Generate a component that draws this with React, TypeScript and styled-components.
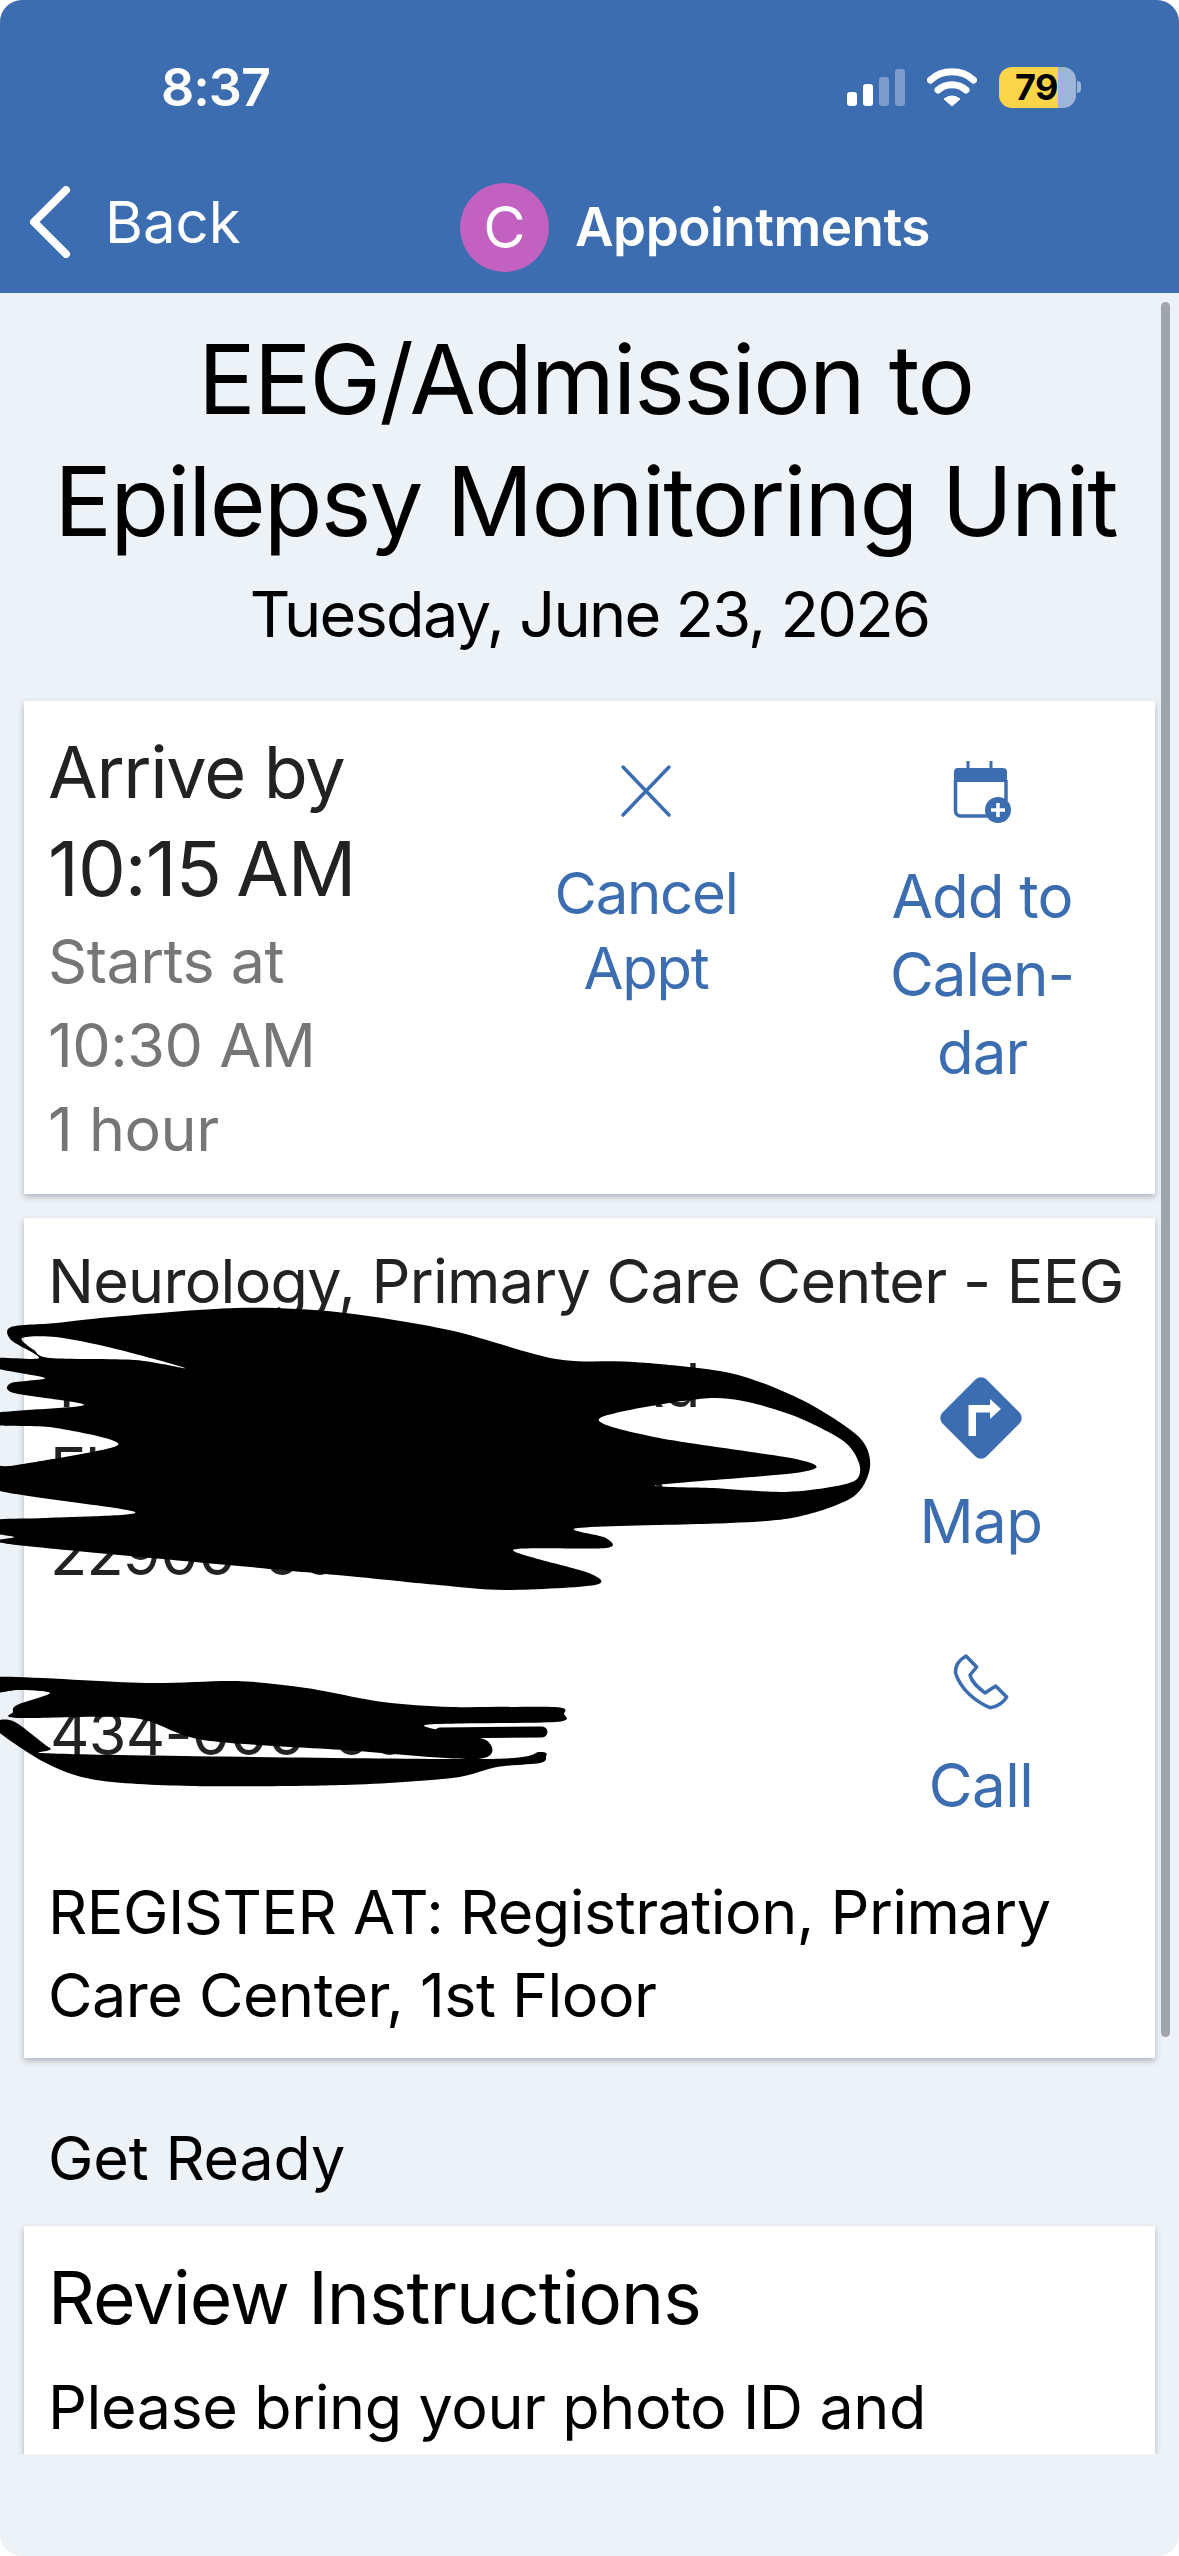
import React from "react";
import styled, { createGlobalStyle } from "styled-components";

const BLUE = "#3c6db0";

const Global = createGlobalStyle`
    html, body { margin: 0; padding: 0; background: #fff; }
    body { font-family: Inter, "Liberation Sans", sans-serif; }
`;

const Screen = styled.div`
    position: relative;
    width: 1179px;
    height: 2556px;
    overflow: hidden;
    background: #edf2f6;
    border-radius: 22px;
    display: flex;
    flex-direction: column;
`;

const Header = styled.header`
    background: ${BLUE};
    height: 293px;
    color: #fff;
    flex-shrink: 0;
    display: flex;
    flex-direction: column;
`;

const StatusBar = styled.div`
    display: flex;
    justify-content: space-between;
    align-items: center;
    height: 174px;
    padding: 0 98px 0 161px;
`;

const Clock = styled.span`
    font-size: 52px;
    font-weight: 600;
    letter-spacing: -1px;
`;

const StatusIcons = styled.div`
    display: flex;
    align-items: center;
    gap: 22px;
`;

const Battery = styled.div`
    display: flex;
    align-items: center;
    gap: 1px;
`;

const BatteryBody = styled.div`
    width: 77px;
    height: 41px;
    border-radius: 13px;
    background: linear-gradient(to right, #fad54a 59px, #9db5d8 59px);
    color: #000;
    font-size: 36px;
    font-weight: 700;
    line-height: 41px;
    padding-right: 18px;
    box-sizing: border-box;
    text-align: right;
    letter-spacing: -0.5px;
`;

const BatteryCap = styled.div`
    width: 4px;
    height: 12px;
    background: #9db5d8;
    border-radius: 0 6px 6px 0;
`;

const NavBar = styled.div`
    display: flex;
    align-items: center;
    height: 90px;
    padding-left: 29px;
    margin-top: 8px;
`;

const BackLink = styled.div`
    display: flex;
    align-items: center;
    gap: 34px;
    font-size: 58px;
    width: 431px;
    margin-top: -10px;
`;

const Avatar = styled.div`
    width: 89px;
    height: 89px;
    border-radius: 50%;
    background: #c261c0;
    font-size: 58px;
    display: flex;
    align-items: center;
    justify-content: center;
    margin-right: 26px;
`;

const NavTitle = styled.span`
    font-size: 53px;
    font-weight: 600;
    letter-spacing: -0.5px;
`;

const Body = styled.main`
    height: 2161px;
    overflow: hidden;
    flex-shrink: 0;
    padding: 25px 24px 0;
    box-sizing: border-box;
`;

const Title = styled.h1`
    margin: 0;
    padding-right: 8px;
    text-align: center;
    font-size: 96px;
    font-weight: 400;
    line-height: 122px;
    color: #000;
    letter-spacing: -1.9px;
    white-space: nowrap;
`;

const DateLine = styled.div`
    text-align: center;
    font-size: 63px;
    line-height: 84px;
    color: #000;
    margin-top: 10px;
    margin-bottom: 45px;
    letter-spacing: -1.7px;
`;

const Card = styled.section`
    background: #fff;
    box-shadow: 0 3px 6px rgba(60, 70, 90, 0.35);
    margin-bottom: 24px;
`;

const TimeCard = styled(Card)`
    display: grid;
    grid-template-columns: 432px 332px 340px;
    height: 493px;
    padding: 23px 0 0 24px;
    box-sizing: border-box;
`;

const Arrive = styled.div`
    font-size: 72px;
    line-height: 96px;
    color: #222;
    letter-spacing: -1.3px;
`;

const ArriveTime = styled.div`
    font-size: 76px;
    letter-spacing: -1px;
    word-spacing: -5px;
`;

const Muted = styled.div`
    font-size: 61px;
    line-height: 84px;
    color: #767676;
    letter-spacing: -0.5px;
    margin-top: 3px;
`;

const Action = styled.div<{ $top: number; $size?: number; $line?: number; $gap?: number; $track?: number }>`
    display: flex;
    flex-direction: column;
    align-items: center;
    text-align: center;
    color: ${BLUE};
    font-size: ${(p) => p.$size ?? 60}px;
    line-height: ${(p) => p.$line ?? 78}px;
    letter-spacing: ${(p) => p.$track ?? -0.5}px;
    padding-top: ${(p) => p.$top}px;

    & > svg {
        height: 70px;
        margin-bottom: ${(p) => p.$gap ?? 30}px;
    }
`;

const PlaceCard = styled(Card)`
    height: 840px;
    padding: 21px 0 0 24px;
    box-sizing: border-box;
    color: #222;
`;

const Line = styled.div`
    font-size: 61px;
    line-height: 84px;
    letter-spacing: -0.7px;
    white-space: nowrap;
`;

const PlaceGrid = styled.div`
    display: grid;
    grid-template-columns: 1fr 250px;
    margin-top: 20px;
    padding-right: 49px;
`;

const AddressBlock = styled.div`
    padding-left: 2px;
    display: flex;
    flex-direction: column;
    gap: 96px;
`;

const Register = styled.div`
    font-size: 61px;
    line-height: 83px;
    color: #000;
    letter-spacing: -0.5px;
    margin-top: 47px;
`;

const SectionLabel = styled.div`
    font-size: 61px;
    line-height: 84px;
    color: #000;
    padding: 34px 24px 26px;
    letter-spacing: -0.2px;
`;

const ReviewCard = styled(Card)`
    height: 300px;
    padding: 27px 24px;
    margin: 0;
    box-sizing: border-box;
    color: #000;
`;

const ReviewTitle = styled.h2`
    margin: 0 0 22px;
    font-size: 73px;
    font-weight: 400;
    line-height: 90px;
    letter-spacing: -1px;
`;

const ReviewText = styled.div`
    font-size: 61px;
    line-height: 84px;
    letter-spacing: -0.4px;
`;

const Footer = styled.div`
    flex: 1;
    background: #edf2f6;
    position: relative;
    z-index: 1;
`;

const Scrollbar = styled.div`
    position: absolute;
    left: 1161px;
    top: 302px;
    width: 9px;
    height: 1735px;
    border-radius: 5px;
    background: #a0a4ab;
`;

const Scribble = styled.svg`
    position: absolute;
    left: 0;
    top: 0;
    z-index: 2;
    pointer-events: none;
`;

// turns traced points into a smooth closed path
function smooth(pts: number[][]) {
    let d = `M${pts[0][0]} ${pts[0][1]}`;
    const n = pts.length;
    for (let i = 0; i < n; i++) {
        const p0 = pts[(i - 1 + n) % n];
        const p1 = pts[i];
        const p2 = pts[(i + 1) % n];
        const p3 = pts[(i + 2) % n];
        const c1x = p1[0] + (p2[0] - p0[0]) / 7;
        const c1y = p1[1] + (p2[1] - p0[1]) / 7;
        const c2x = p2[0] - (p3[0] - p1[0]) / 7;
        const c2y = p2[1] - (p3[1] - p1[1]) / 7;
        d += ` C${c1x} ${c1y} ${c2x} ${c2y} ${p2[0]} ${p2[1]}`;
    }
    return d + " Z";
}

const mainBlob = [
    [11, 1327], [56, 1323], [112, 1317], [236, 1308], [337, 1312], [449, 1330], [556, 1359], [634, 1362],
    [730, 1373], [802, 1400], [859, 1437], [870, 1467], [853, 1497], [797, 1517], [730, 1523], [578, 1528],
    [606, 1538], [606, 1548], [513, 1550], [589, 1573], [595, 1585], [505, 1590], [438, 1585], [337, 1575],
    [17, 1545], [14, 1537], [-4, 1533], [-4, 1520], [45, 1518], [135, 1512], [-4, 1490], [-4, 1467], [17, 1465],
    [118, 1445], [56, 1428], [-4, 1425], [-4, 1413], [84, 1405], [14, 1393], [11, 1383], [45, 1378], [-4, 1368],
    [-4, 1358], [39, 1358], [11, 1340],
];
const loopHole = [[22, 1338], [56, 1337], [112, 1348], [185, 1368], [135, 1360], [50, 1358], [34, 1350]];
const rightHole = [
    [600, 1418], [713, 1398], [786, 1413], [842, 1440], [859, 1463], [856, 1480], [825, 1488], [780, 1492],
    [713, 1488], [657, 1485], [802, 1472], [800, 1460], [654, 1437],
];
const phoneMass = [
    [-4, 1677], [145, 1683], [237, 1681], [306, 1688], [383, 1702], [452, 1707], [555, 1707], [564, 1714],
    [555, 1722], [425, 1725], [486, 1740], [478, 1759], [344, 1750], [203, 1740], [134, 1718], [17, 1718],
    [13, 1712], [17, 1705], [50, 1693], [19, 1690], [-4, 1692],
];
const phoneBand = [
    [-4, 1721], [15, 1722], [50, 1748], [69, 1754], [478, 1759], [540, 1752], [546, 1757], [540, 1763], [497, 1767],
    [452, 1778], [344, 1785], [191, 1786], [96, 1780], [46, 1763], [-4, 1730],
];

export default function App() {
    return (
        <>
            <Global />
            <Screen>
                <Header>
                    <StatusBar>
                        <Clock>8:37</Clock>
                        <StatusIcons>
                            <svg width="58" height="38" viewBox="0 0 58 38">
                                <rect x="0" y="24" width="10" height="14" rx="3" fill="#fff" />
                                <rect x="16" y="16" width="10" height="22" rx="3" fill="#fff" />
                                <rect x="32" y="9" width="10" height="29" rx="3" fill="#7c9ccb" />
                                <rect x="48" y="1" width="10" height="37" rx="3" fill="#7c9ccb" />
                            </svg>
                            <svg width="50" height="38" viewBox="0 0 50 38">
                                <path d="M3.5 12 C15 1 35 1 46.5 12" fill="none" stroke="#fff" strokeWidth="7" strokeLinecap="round" />
                                <path d="M11 22 C19 15 31 15 39 22" fill="none" stroke="#fff" strokeWidth="7" strokeLinecap="round" />
                                <path d="M17 31 Q25 25 33 31 L25 38 Z" fill="#fff" stroke="#fff" strokeWidth="1" strokeLinejoin="round" />
                            </svg>
                            <Battery>
                                <BatteryBody>79</BatteryBody>
                                <BatteryCap />
                            </Battery>
                        </StatusIcons>
                    </StatusBar>
                    <NavBar>
                        <BackLink>
                            <svg width="42" height="72" viewBox="0 0 42 72">
                                <path d="M37 4 L5 36 L37 68" fill="none" stroke="#fff" strokeWidth="8" strokeLinecap="round" strokeLinejoin="round" />
                            </svg>
                            Back
                        </BackLink>
                        <Avatar>C</Avatar>
                        <NavTitle>Appointments</NavTitle>
                    </NavBar>
                </Header>
                <Body>
                    <Title>EEG/Admission to<br />Epilepsy Monitoring Unit</Title>
                    <DateLine>Tuesday, June 23, 2026</DateLine>
                    <TimeCard>
                        <div>
                            <Arrive>Arrive by<ArriveTime>10:15 AM</ArriveTime></Arrive>
                            <Muted>Starts at<br />10:30 AM<br />1 hour</Muted>
                        </div>
                        <Action $top={32} $size={58} $line={75} $gap={30} $track={-1.2}>
                            <svg width="52" viewBox="0 0 52 70">
                                <path d="M3 11 L49 59 M49 11 L3 59" stroke={BLUE} strokeWidth="3.5" strokeLinecap="round" />
                            </svg>
                            Cancel<br />Appt
                        </Action>
                        <Action $top={31} $gap={32} $track={-1}>
                            <svg width="60" viewBox="0 0 60 70">
                                <path d="M16 6 V14 M39 6 V14" stroke={BLUE} strokeWidth="3" />
                                <path d="M5 13 H51 a4 4 0 0 1 4 4 V27 H2 V17 a4 4 0 0 1 3 -4 Z" fill={BLUE} />
                                <path d="M3.5 25 V56 a5 5 0 0 0 5 5 H36 M54 25 V46" fill="none" stroke={BLUE} strokeWidth="3.5" />
                                <circle cx="46" cy="55" r="13" fill={BLUE} />
                                <path d="M46 48 V62 M39 55 H53" stroke="#fff" strokeWidth="3.5" />
                            </svg>
                            Add to<br />Calen-<br />dar
                        </Action>
                    </TimeCard>
                    <PlaceCard>
                        <Line>Neurology, Primary Care Center - EEG</Line>
                        <PlaceGrid>
                            <AddressBlock>
                                <div>
                                    <Line>1 Placeholder Street Rd</Line>
                                    <Line>Floor, Placeholder, VA</Line>
                                    <Line>22900-00</Line>
                                </div>
                                <Line>434-000-00</Line>
                            </AddressBlock>
                            <div>
                                <Action $top={40} $gap={29}>
                                    <svg width="82" viewBox="0 0 82 70" overflow="visible">
                                        <path d="M35.5 -3.5 a8 8 0 0 1 11 0 L79.5 29.5 a8 8 0 0 1 0 11 L46.5 73.5 a8 8 0 0 1 -11 0 L2.5 40.5 a8 8 0 0 1 0 -11 Z" fill={BLUE} />
                                        <path d="M28.5 53 V22 H50 V16 L61 26 L50 36 V29.5 H36 V53 Z" fill="#fff" />
                                    </svg>
                                    Map
                                </Action>
                                <Action $top={86}>
                                    <svg width="54" viewBox="0 0 54 70" overflow="visible">
                                        <path
                                            d="M12 10 L22.7 21 L16 29 C18 37 25 42 31 47 L41.7 40 L52.7 51 C50 56 43 61 36 61.7 C22 56 7 44 1.5 27 C1 20 5 14 12 10 Z"
                                            fill="none"
                                            stroke={BLUE}
                                            strokeWidth="3.5"
                                            strokeLinejoin="round"
                                        />
                                    </svg>
                                    Call
                                </Action>
                            </div>
                        </PlaceGrid>
                        <Register>REGISTER AT: Registration, Primary<br />Care Center, 1st Floor</Register>
                    </PlaceCard>
                    <SectionLabel>Get Ready</SectionLabel>
                    <ReviewCard>
                        <ReviewTitle>Review Instructions</ReviewTitle>
                        <ReviewText>Please bring your photo ID and</ReviewText>
                    </ReviewCard>
                </Body>
                <Footer />
                <Scrollbar />
                <Scribble width="1179" height="2556" viewBox="0 0 1179 2556">
                    <path d={[smooth(mainBlob), smooth(loopHole), smooth(rightHole)].join(" ")} fill="#000" fillRule="evenodd" />
                    <path d={smooth(phoneMass)} fill="#000" />
                    <path d={smooth(phoneBand)} fill="#000" />
                    <path d="M440 1733 L542 1732" stroke="#000" strokeWidth="11" strokeLinecap="round" />
                </Scribble>
            </Screen>
        </>
    );
}
